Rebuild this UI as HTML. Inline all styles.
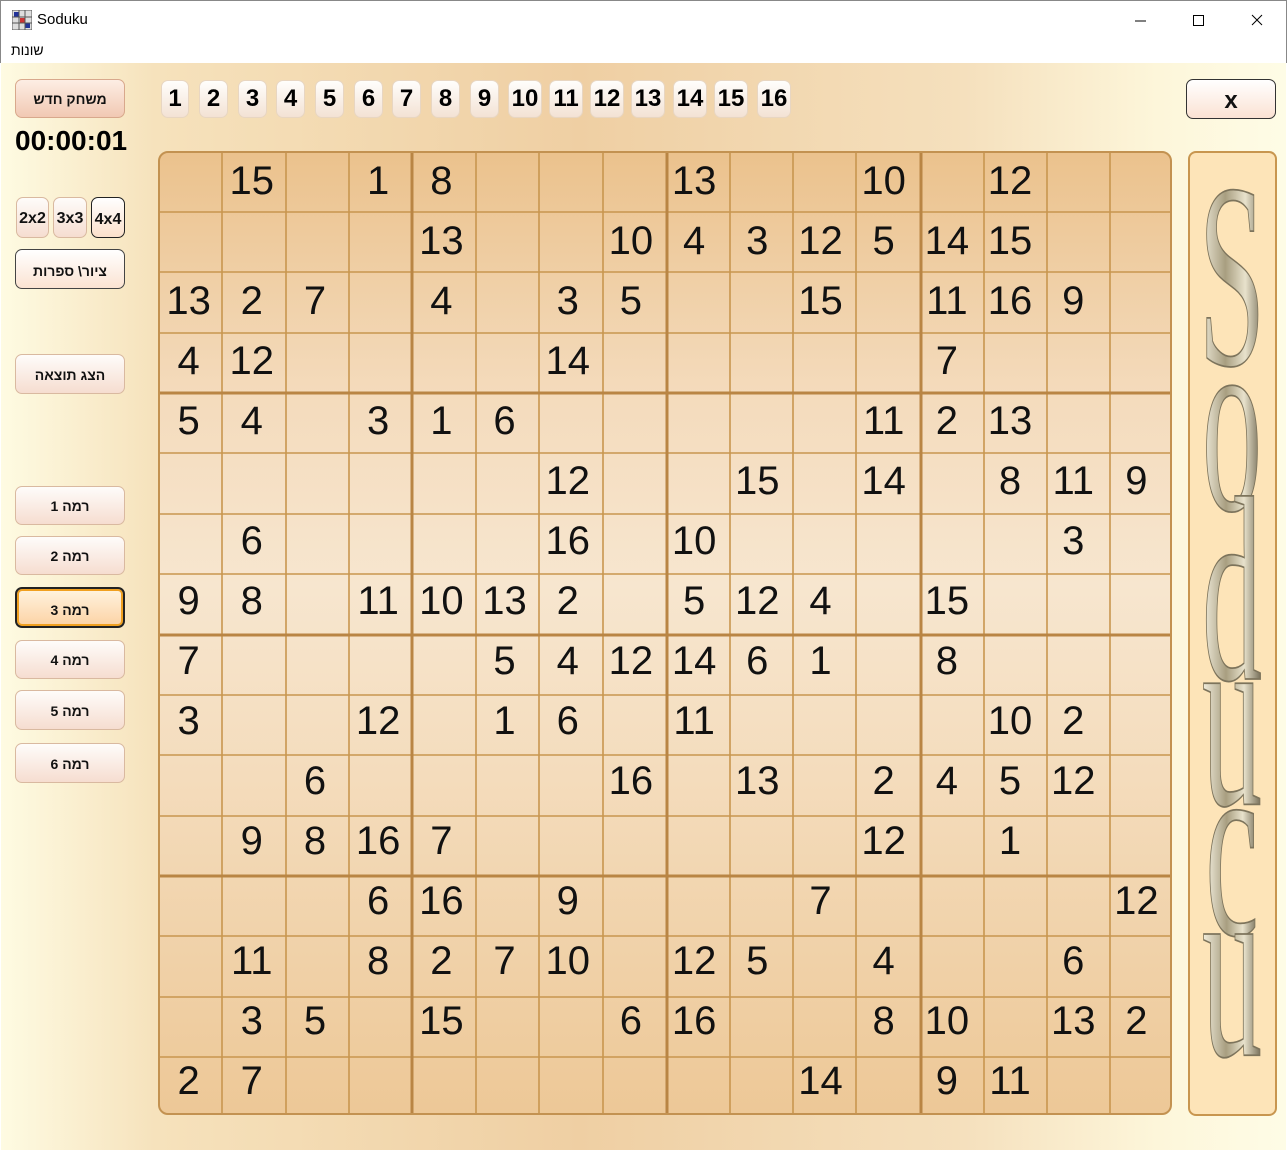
<!DOCTYPE html>
<html><head><meta charset="utf-8"><style>
*{margin:0;padding:0;box-sizing:border-box}
body{width:1287px;height:1150px;overflow:hidden;font-family:"Liberation Sans",sans-serif;background:#fff;position:relative}
.title{position:absolute;left:0;top:0;width:1287px;height:38px;background:#fff;border:1px solid #888;border-bottom:none}
.title span{position:absolute;left:36px;top:10px;font-size:15px}
.menu{position:absolute;left:0;top:38px;width:1287px;height:25px;background:#fff;border-left:1px solid #888;border-right:1px solid #888}
.menu span{position:absolute;left:10px;top:4px;font-size:14px;font-family:"Liberation Sans","Noto Sans CJK JP",sans-serif}
.main{position:absolute;left:1px;top:63px;width:1285px;height:1087px;background:linear-gradient(90deg,#fefbe2 0%,#f6e2bc 12%,#efcfa3 45%,#f5e0bd 75%,#fdf6da 90%,#fefce6 100%)}
.btn{position:absolute;border:1px solid #d9b9a0;border-radius:7px;background:linear-gradient(#fefcfa,#f6ddd0);font-weight:bold;font-size:14px;text-align:center;color:#111;font-family:"Liberation Sans","Noto Sans CJK JP",sans-serif}
.nb{position:absolute;top:80px;height:38px;border:1px solid #e8d6c2;border-radius:7px;background:linear-gradient(#fffefc,#f3e2d4);font-size:24px;font-weight:bold;text-align:center;line-height:36px}
.grid{position:absolute;left:158px;top:151px;width:1014px;height:964px;border-radius:10px;border:2px solid #c39251;background:linear-gradient(#ebc28d 0%,#f4dbbc 25%,#f7e6cf 45%,#f4dcbc 65%,#edc897 100%);overflow:hidden}
.cells{position:absolute;left:-3px;top:-2px;width:1010px;height:960px;display:grid;grid-template-columns:repeat(16,63.2px);grid-template-rows:repeat(16,60px)}
.cells div{font-size:40px;text-align:center;line-height:60px;color:#111}
</style></head><body>
<div class="title">
<svg style="position:absolute;left:11px;top:9px" width="20" height="20"><rect x="0" y="0" width="20" height="20" fill="#ddd" stroke="#555"/><rect x="2" y="2" width="5" height="5" fill="#239"/><rect x="13" y="13" width="5" height="5" fill="#239"/><rect x="8" y="8" width="5" height="5" fill="#c33"/><path d="M0 7H20M0 13H20M7 0V20M13 0V20" stroke="#555"/></svg>
<span>Soduku</span>
<svg style="position:absolute;left:1130px;top:12px" width="140" height="16"><path d="M4 8H15" stroke="#000"/><rect x="62.5" y="2.5" width="10" height="10" fill="none" stroke="#000"/><path d="M121 2L131 12M131 2L121 12" stroke="#000"/></svg>
</div>
<div class="menu"><span>שונות</span></div>
<div class="main"></div>

<div class="btn" style="left:15px;top:79px;width:110px;height:39px;line-height:39px;background:linear-gradient(#fdeee4,#f1c9b3);border-color:#d8a88c">משחק חדש</div>
<div style="position:absolute;left:15px;top:125px;font-size:28px;font-weight:bold">00:00:01</div>
<div class="btn" style="left:16px;top:197px;width:33px;height:41px;line-height:41px;font-size:16px">2x2</div>
<div class="btn" style="left:53px;top:197px;width:34px;height:41px;line-height:41px;font-size:16px">3x3</div>
<div class="btn" style="left:91px;top:197px;width:34px;height:41px;line-height:43px;font-size:16px;border-color:#222;background:linear-gradient(#fff,#fbe0cb)">4x4</div>
<div class="btn" style="left:15px;top:249px;width:110px;height:40px;line-height:42px;border-color:#444;background:linear-gradient(#fff,#fbe3d2)">ציור\ ספרות</div>
<div class="btn" style="left:15px;top:354px;width:110px;height:40px;line-height:40px">הצג תוצאה</div>
<div class="btn" style="left:15px;top:486px;width:110px;height:39px;line-height:39px">רמה 1</div>
<div class="btn" style="left:15px;top:536px;width:110px;height:39px;line-height:39px">רמה 2</div>
<div class="btn" style="left:15px;top:587px;width:110px;height:41px;line-height:42px;border:2px solid #222;box-shadow:inset 0 0 0 2px #f0a020;background:linear-gradient(#fff4e0,#fcd2a4)">רמה 3</div>
<div class="btn" style="left:15px;top:640px;width:110px;height:39px;line-height:39px">רמה 4</div>
<div class="btn" style="left:15px;top:690px;width:110px;height:40px;line-height:40px">רמה 5</div>
<div class="btn" style="left:15px;top:743px;width:110px;height:40px;line-height:40px">רמה 6</div>

<div class="nb" style="left:161px;width:28px">1</div>
<div class="nb" style="left:199px;width:29px">2</div>
<div class="nb" style="left:238px;width:29px">3</div>
<div class="nb" style="left:276px;width:29px">4</div>
<div class="nb" style="left:315px;width:29px">5</div>
<div class="nb" style="left:354px;width:29px">6</div>
<div class="nb" style="left:392px;width:29px">7</div>
<div class="nb" style="left:431px;width:29px">8</div>
<div class="nb" style="left:470px;width:29px">9</div>
<div class="nb" style="left:508px;width:34px">10</div>
<div class="nb" style="left:549px;width:34px">11</div>
<div class="nb" style="left:590px;width:34px">12</div>
<div class="nb" style="left:631px;width:34px">13</div>
<div class="nb" style="left:673px;width:34px">14</div>
<div class="nb" style="left:714px;width:34px">15</div>
<div class="nb" style="left:757px;width:34px">16</div>

<div class="btn" style="left:1186px;top:79px;width:90px;height:40px;line-height:42px;font-size:24px;border-color:#333;background:linear-gradient(#fff,#fbe2d3)">x</div>

<div class="grid">
<svg style="position:absolute;left:0;top:0" width="1010" height="960">
<g stroke="#c8964f" stroke-width="1.6">
<path d="M62 0V960M126 0V960M189 0V960M316 0V960M379 0V960M443 0V960M570 0V960M633 0V960M696 0V960M824 0V960M887 0V960M950 0V960"/>
<path d="M0 59H1010M0 119H1010M0 180H1010M0 300H1010M0 361H1010M0 421H1010M0 542H1010M0 602H1010M0 663H1010M0 783H1010M0 844H1010M0 904H1010"/>
</g>
<g stroke="#b98544" stroke-width="3">
<path d="M252 0V960M507 0V960M761 0V960M0 240H1010M0 482H1010M0 723H1010"/>
</g>
</svg>
<div class="cells">
<div></div><div>15</div><div></div><div>1</div><div>8</div><div></div><div></div><div></div><div>13</div><div></div><div></div><div>10</div><div></div><div>12</div><div></div><div></div>
<div></div><div></div><div></div><div></div><div>13</div><div></div><div></div><div>10</div><div>4</div><div>3</div><div>12</div><div>5</div><div>14</div><div>15</div><div></div><div></div>
<div>13</div><div>2</div><div>7</div><div></div><div>4</div><div></div><div>3</div><div>5</div><div></div><div></div><div>15</div><div></div><div>11</div><div>16</div><div>9</div><div></div>
<div>4</div><div>12</div><div></div><div></div><div></div><div></div><div>14</div><div></div><div></div><div></div><div></div><div></div><div>7</div><div></div><div></div><div></div>
<div>5</div><div>4</div><div></div><div>3</div><div>1</div><div>6</div><div></div><div></div><div></div><div></div><div></div><div>11</div><div>2</div><div>13</div><div></div><div></div>
<div></div><div></div><div></div><div></div><div></div><div></div><div>12</div><div></div><div></div><div>15</div><div></div><div>14</div><div></div><div>8</div><div>11</div><div>9</div>
<div></div><div>6</div><div></div><div></div><div></div><div></div><div>16</div><div></div><div>10</div><div></div><div></div><div></div><div></div><div></div><div>3</div><div></div>
<div>9</div><div>8</div><div></div><div>11</div><div>10</div><div>13</div><div>2</div><div></div><div>5</div><div>12</div><div>4</div><div></div><div>15</div><div></div><div></div><div></div>
<div>7</div><div></div><div></div><div></div><div></div><div>5</div><div>4</div><div>12</div><div>14</div><div>6</div><div>1</div><div></div><div>8</div><div></div><div></div><div></div>
<div>3</div><div></div><div></div><div>12</div><div></div><div>1</div><div>6</div><div></div><div>11</div><div></div><div></div><div></div><div></div><div>10</div><div>2</div><div></div>
<div></div><div></div><div>6</div><div></div><div></div><div></div><div></div><div>16</div><div></div><div>13</div><div></div><div>2</div><div>4</div><div>5</div><div>12</div><div></div>
<div></div><div>9</div><div>8</div><div>16</div><div>7</div><div></div><div></div><div></div><div></div><div></div><div></div><div>12</div><div></div><div>1</div><div></div><div></div>
<div></div><div></div><div></div><div>6</div><div>16</div><div></div><div>9</div><div></div><div></div><div></div><div>7</div><div></div><div></div><div></div><div></div><div>12</div>
<div></div><div>11</div><div></div><div>8</div><div>2</div><div>7</div><div>10</div><div></div><div>12</div><div>5</div><div></div><div>4</div><div></div><div></div><div>6</div><div></div>
<div></div><div>3</div><div>5</div><div></div><div>15</div><div></div><div></div><div>6</div><div>16</div><div></div><div></div><div>8</div><div>10</div><div></div><div>13</div><div>2</div>
<div>2</div><div>7</div><div></div><div></div><div></div><div></div><div></div><div></div><div></div><div></div><div>14</div><div></div><div>9</div><div>11</div><div></div><div></div>
</div>
</div>

<div style="position:absolute;left:1188px;top:151px;width:89px;height:965px;border:2px solid #c8964f;border-radius:8px;background:#fde4b8"></div>
<svg style="position:absolute;left:1188px;top:151px" width="89" height="965">
<defs><linearGradient id="m" x1="0" x2="1"><stop offset="0" stop-color="#f4f0e0"/><stop offset="0.4" stop-color="#a89e80"/><stop offset="0.7" stop-color="#e8e2cc"/><stop offset="1" stop-color="#6e6650"/></linearGradient></defs>
<g transform="scale(1,2.2)" font-family="Liberation Serif,serif" fill="url(#m)" stroke="#7d745c" stroke-width="0.8" text-anchor="middle" font-size="120">
<text x="44" y="97">S</text>
<text x="44" y="163">o</text>
<text x="44" y="240">d</text>
<text x="44" y="297">u</text>
<text x="44" y="356">c</text>
<text x="44" y="411">u</text>
</g>
</svg>
</body></html>
